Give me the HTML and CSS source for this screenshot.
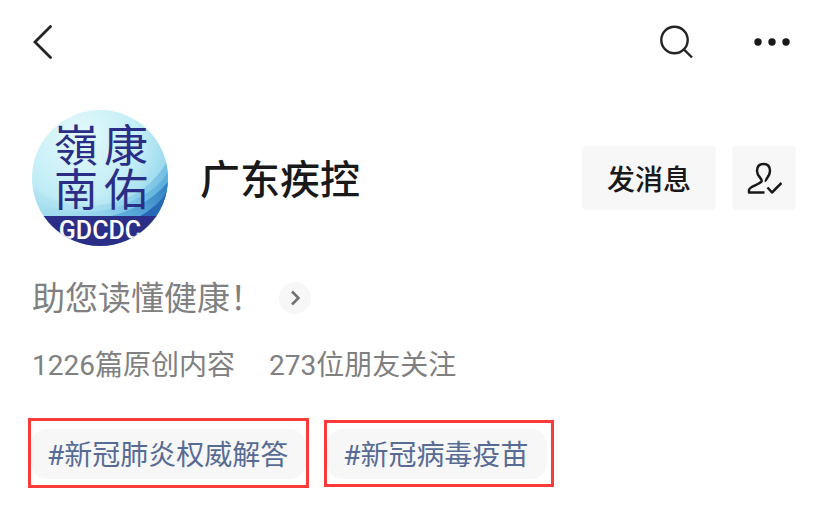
FILE: index.html
```html
<!DOCTYPE html>
<html lang="zh-CN">
<head>
<meta charset="utf-8">
<meta name="viewport" content="width=device-width, initial-scale=1">
<title>广东疾控</title>
<link rel="stylesheet" href="styles.css">
</head>
<body>
<header class="nav">
  <button class="icon-button" aria-label="返回">
    <svg width="20" height="34" viewBox="0 0 20 34" fill="none" stroke="#242424" stroke-width="2.800" stroke-linecap="round"><path d="M18.500 1.500 3 17 18.500 32.500"/></svg>
  </button>
  <div class="nav-actions">
    <button class="icon-button" aria-label="搜索">
      <svg width="34" height="34" viewBox="0 0 34 34" fill="none" stroke="#242424" stroke-width="2.400"><circle cx="14.500" cy="15" r="13.200"/><path d="M23.500 24l8.500 8.500"/></svg>
    </button>
    <button class="icon-button" aria-label="更多">
      <svg width="36" height="8" viewBox="0 0 36 8" fill="#191919"><circle cx="4" cy="4" r="3.700"/><circle cx="18" cy="4" r="3.700"/><circle cx="32" cy="4" r="3.700"/></svg>
    </button>
  </div>
</header>
<main class="account">
  <section class="profile">
    <svg class="avatar" viewBox="0 0 136 136" role="img" aria-label="广东疾控头像">
      <defs>
        <clipPath id="disc"><circle cx="68" cy="68" r="68"/></clipPath>
        <radialGradient id="sky" cx="0.35" cy="0.2" r="0.9">
          <stop offset="0" stop-color="#e4fafb"/>
          <stop offset="0.5" stop-color="#c2edf6"/>
          <stop offset="1" stop-color="#6fc3e3"/>
        </radialGradient>
        <linearGradient id="wave" x1="0" y1="0.6" x2="1" y2="0.3">
          <stop offset="0" stop-color="#8fd3ec" stop-opacity="0.2"/>
          <stop offset="1" stop-color="#4aa3d8"/>
        </linearGradient>
        <linearGradient id="deep" x1="0" y1="1" x2="1" y2="0">
          <stop offset="0" stop-color="#61b5e0"/>
          <stop offset="1" stop-color="#2470b9"/>
        </linearGradient>
      </defs>
      <g clip-path="url(#disc)">
        <rect width="136" height="136" fill="url(#sky)"/>
        <path d="M0 78Q34 102 75 94T136 50V108H0Z" fill="url(#wave)" opacity=".45"/>
        <path d="M0 92Q54 110 91 95T136 61V108H0Z" fill="url(#wave)" opacity=".6"/>
        <path d="M70 108Q112 100 136 72V108Z" fill="url(#deep)" opacity=".8"/>
        <path d="M105 108Q127 96 136 80V108Z" fill="#2769b5"/>
        <rect y="106" width="136" height="30" fill="#2b2e86"/>
        <text class="avatar-script" x="94" y="13">康佑</text>
        <text class="avatar-script" x="44" y="13">嶺南</text>
        <text class="avatar-latin" x="68" y="129">GDCDC</text>
      </g>
    </svg>
    <h1 class="name">广东疾控</h1>
    <div class="actions">
      <button class="action action-message">发消息</button>
      <button class="action action-follow" aria-label="已关注">
        <svg width="36" height="34" viewBox="0 0 36 34" fill="none" stroke="#191919" stroke-width="2.500" stroke-linejoin="round"><path d="M20 20.500C18.500 18.500 24 15.500 24 10C24 5.500 21.500 3 17.500 3S11 5.500 11 10C11 15.500 17 18 15.500 20.500C13.500 23.500 3 25.500 3 29V31.500H18.500"/><path d="M21.500 26.500l4.500 5L35.500 22"/></svg>
      </button>
    </div>
  </section>
  <div class="slogan">
    <p class="slogan-text">助您读懂健康！</p>
    <button class="more" aria-label="展开">
      <svg width="10" height="16" viewBox="0 0 10 16" fill="none" stroke="#727272" stroke-width="2.600"><path d="M2 1.500 8.500 8 2 14.500"/></svg>
    </button>
  </div>
  <p class="stats"><span>1226篇原创内容</span><span>273位朋友关注</span></p>
  <nav class="tags">
    <div class="mark mark-first"><a class="tag" href="#answers">#新冠肺炎权威解答</a></div>
    <div class="mark"><a class="tag" href="#vaccine">#新冠病毒疫苗</a></div>
  </nav>
</main>
</body>
</html>
```
FILE: styles.css
```css
* {
  box-sizing: border-box;
}

body {
  margin: 0;
  background: #fff;
  color: #191919;
  font-family: Roboto, "Noto Sans CJK SC", sans-serif;
}

h1,
p {
  margin: 0;
}

button {
  padding: 0;
  border: 0;
  background: none;
  color: inherit;
  font: inherit;
}

svg {
  display: block;
}

.nav {
  display: flex;
  align-items: center;
  justify-content: space-between;
  height: 84px;
  padding: 0 33px 0 32px;
}

.nav-actions {
  display: flex;
  align-items: center;
  gap: 60px;
}

.account {
  padding: 26px 27px 32px 32px;
}

.profile {
  display: flex;
  align-items: center;
}

.avatar {
  flex: none;
  width: 136px;
  height: 136px;
}

.avatar-script {
  fill: #2b2e86;
  font-family: "Noto Sans CJK TC", sans-serif;
  font-size: 44px;
  writing-mode: vertical-rl;
}

.avatar-latin {
  fill: #fff;
  font-size: 25px;
  font-weight: 500;
  text-anchor: middle;
}

.name {
  margin-left: 32px;
  padding-top: 6px;
  font-size: 40px;
  font-weight: 500;
  line-height: 56px;
}

.actions {
  display: flex;
  gap: 16px;
  margin-left: auto;
}

.action {
  display: flex;
  align-items: center;
  justify-content: center;
  height: 64px;
  border-radius: 4px;
  background: #f7f7f7;
  font-size: 28px;
  font-weight: 500;
}

.action-message {
  padding: 0 25px;
}

.action-follow {
  width: 64px;
}

.slogan {
  display: flex;
  align-items: center;
  margin-top: 28px;
  color: #808080;
}

.slogan-text {
  padding-top: 2px;
  font-size: 33px;
  line-height: 46px;
}

.more {
  display: flex;
  align-items: center;
  justify-content: center;
  width: 32px;
  height: 32px;
  margin-left: 16px;
  border-radius: 50%;
  background: #f7f7f7;
}

.stats {
  display: flex;
  gap: 34px;
  margin-top: 24px;
  color: #808080;
  font-size: 28px;
  line-height: 40px;
}

.tags {
  display: flex;
  align-items: center;
  gap: 15px;
  margin: 32px 0 0 -4px;
}

.mark {
  padding: 6px 4px 5px 0;
  border: 3px solid #fb3a3a;
}

.mark-first {
  padding: 8px 0 6px;
}

.tag {
  display: block;
  padding: 4px 18px 0 16px;
  border-radius: 16px;
  background: #f7f7f7;
  color: #576b95;
  font-size: 28px;
  line-height: 46px;
  text-decoration: none;
}
```
